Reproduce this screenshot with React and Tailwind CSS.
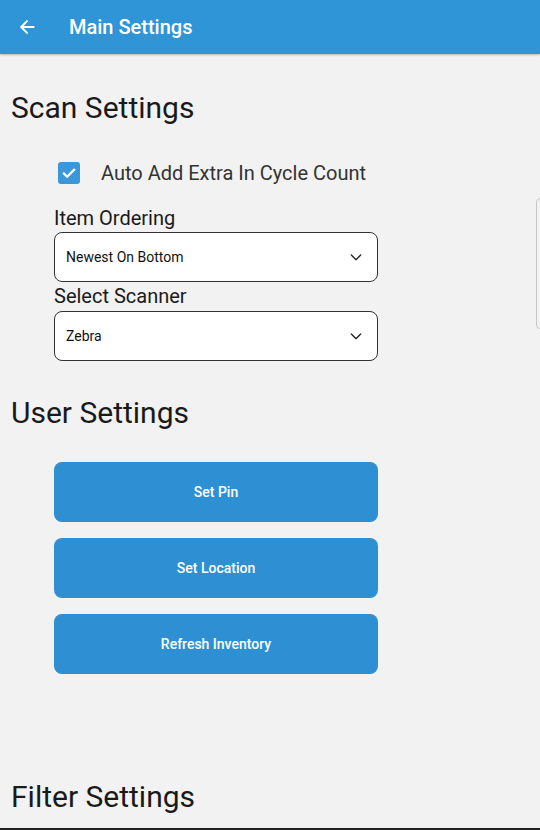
import React from "react";

function Chevron() {
  return (
    <svg width="16" height="16" viewBox="0 0 24 24" fill="none" stroke="#222" strokeWidth="2" strokeLinecap="round" strokeLinejoin="round">
      <path d="M5 9l7 7 7-7" />
    </svg>
  );
}

function Select({ value }) {
  return (
    <div className="flex items-center justify-between h-[50px] w-[324px] rounded-[8px] border border-[#333] bg-white pl-[11px] pr-[13px]">
      <span className="text-[14px] text-[#111]">{value}</span>
      <Chevron />
    </div>
  );
}

function Btn({ children }) {
  return (
    <div className="flex items-center justify-center h-[60px] w-[324px] rounded-[8px] bg-[#2e90d2] text-white text-[14px] font-medium">
      {children}
    </div>
  );
}

export default function App() {
  return (
    <div className="relative w-[540px] h-[830px] overflow-hidden bg-[#f2f2f2]" style={{ fontFamily: "Roboto, 'Noto Sans', sans-serif" }}>
      <div className="flex items-center h-[54px] bg-[#2f95d6] shadow-[0_1px_2px_rgba(0,0,0,0.25)]">
        <div className="w-[69px] flex pl-[17px]">
          <svg width="20" height="20" viewBox="0 0 24 24" fill="none" stroke="white" strokeWidth="2.4" strokeLinecap="round" strokeLinejoin="round">
            <path d="M20 12H5M12 5l-7 7 7 7" />
          </svg>
        </div>
        <span className="text-white text-[20px] font-medium">Main Settings</span>
      </div>

      <div className="pl-[11px] pt-[34px]">
        <div className="text-[30px] leading-[40px] text-[#1a1a1a]">Scan Settings</div>
      </div>

      <div className="pl-[58px] mt-[30px] flex items-center">
        <div className="w-[22px] h-[22px] rounded-[3px] bg-[#3a98d9] flex items-center justify-center">
          <svg width="18" height="18" viewBox="0 0 24 24" fill="none" stroke="white" strokeWidth="3" strokeLinecap="round" strokeLinejoin="round">
            <path d="M5 12.5l4.5 4.5L19 7.5" />
          </svg>
        </div>
        <span className="ml-[21px] text-[20px] text-[#333]">Auto Add Extra In Cycle Count</span>
      </div>

      <div className="pl-[54px] mt-[17px] flex flex-col">
        <div className="text-[20px] leading-[27px] text-[#1a1a1a]">Item Ordering</div>
        <Select value="Newest On Bottom" />
        <div className="text-[20px] leading-[29px] text-[#1a1a1a]">Select Scanner</div>
        <Select value="Zebra" />
      </div>

      <div className="pl-[11px] mt-[32px]">
        <div className="text-[30px] leading-[40px] text-[#1a1a1a]">User Settings</div>
      </div>

      <div className="pl-[54px] mt-[29px] flex flex-col gap-[16px]">
        <Btn>Set Pin</Btn>
        <Btn>Set Location</Btn>
        <Btn>Refresh Inventory</Btn>
      </div>

      <div className="pl-[11px] mt-[103px]">
        <div className="text-[30px] leading-[40px] text-[#1a1a1a]">Filter Settings</div>
      </div>

      <div className="absolute left-[536px] top-[198px] w-[10px] h-[131px] rounded-[4px] border border-[#c8c8c8]" />
      <div className="absolute left-0 bottom-0 w-full h-[2px] bg-[#222]" />
    </div>
  );
}
